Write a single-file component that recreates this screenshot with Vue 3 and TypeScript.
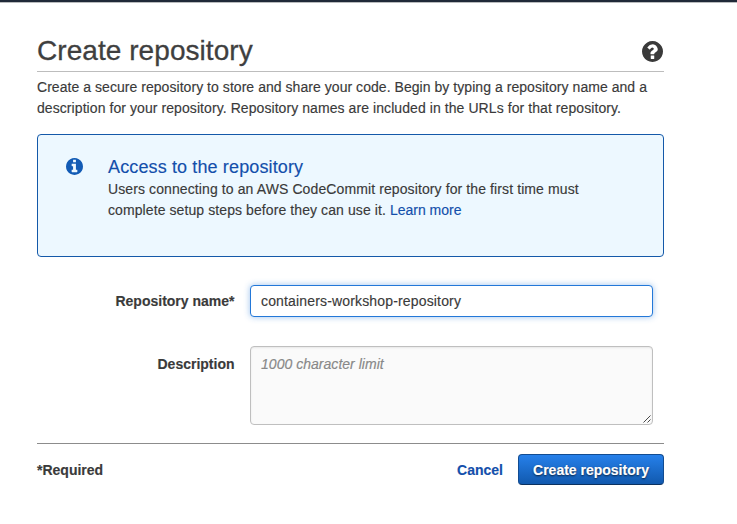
<script setup lang="ts">
import { ref } from 'vue'

const name = ref<string>('containers-workshop-repository')
const description = ref<string>('')
</script>

<template>
  <div class="page">
    <div class="topbar"></div>
    <main class="content">
      <header class="head">
        <h1>Create repository</h1>
        <svg class="help" viewBox="0 0 1536 1536" aria-label="Help">
          <path
            d="M896 1280v-192q0-14-9-23t-23-9H672q-14 0-23 9t-9 23v192q0 14 9 23t23 9h192q14 0 23-9t9-23zm256-672q0-88-55.500-173T958 297t-170-56q-243 0-391 213-15 24 8 42l142 120q7 6 19 6 16 0 25-12 53-78 86-102 34-24 76-24 48 0 80 26t32 59q0 38-20 61t-58 45q-63 28-115.500 86.500T620 892v46q0 14 9 23t23 9h212q14 0 23-9t9-23q0-19 21.500-49.500T972 839q32-18 49-28.500t46-35 44.500-48 28-50 12.500-70zm384 160q0 209-103 385.500T1153.500 1433 768 1536t-385.500-103T103 1153.500 0 768t103-385.500T382.500 103 768 0t385.500 103T1433 382.500 1536 768z"
          />
        </svg>
      </header>
      <p class="intro">
        <span class="intro-lead">Create a secure repository to store and share your code. Begin by typing a repository name and a</span><br />
        <span class="intro-rest">description for your repository. Repository names are included in the URLs for that repository.</span>
      </p>

      <section class="alert">
        <svg class="info" viewBox="0 0 1536 1536" aria-hidden="true">
          <path
            d="M1024 1248v-160q0-14-9-23t-23-9h-96V544q0-14-9-23t-23-9H544q-14 0-23 9t-9 23v160q0 14 9 23t23 9h96v320h-96q-14 0-23 9t-9 23v160q0 14 9 23t23 9h448q14 0 23-9t9-23zM896 352V192q0-14-9-23t-23-9H672q-14 0-23 9t-9 23v160q0 14 9 23t23 9h192q14 0 23-9t9-23zm640 416q0 209-103 385.500T1153.500 1433 768 1536t-385.500-103T103 1153.500 0 768t103-385.500T382.500 103 768 0t385.500 103T1433 382.500 1536 768z"
          />
        </svg>
        <div>
          <h2>Access to the repository</h2>
          <p>
            <span class="alert-lead">Users connecting to an AWS CodeCommit repository for the first time must</span><br />
            <span class="alert-rest">complete setup steps before they can use it. </span><a>Learn more</a>
          </p>
        </div>
      </section>

      <form class="form" @submit.prevent>
        <label for="name">Repository name*</label>
        <input id="name" v-model="name" class="field name" type="text" />
        <label for="desc">Description</label>
        <div class="area">
          <textarea id="desc" v-model="description" class="field desc" placeholder="1000 character limit"></textarea>
          <svg class="grip" viewBox="0 0 8 8" aria-hidden="true"><path d="M0.500 7.500L7.500 0.500M4.500 7.500L7.500 4.500" /></svg>
        </div>
      </form>

      <footer class="foot">
        <span class="required">*Required</span>
        <a class="cancel">Cancel</a>
        <button type="button">Create repository</button>
      </footer>
    </main>
  </div>
</template>

<style>
body {
  background: #fff;
}
</style>

<style scoped>
.page {
  box-sizing: border-box;
  width: 737px;
  height: 524px;
  overflow: hidden;
  background: #fff;
  color: #3a3a3a;
  font: 14px/21px 'Liberation Sans', Arial, sans-serif;
  -webkit-text-stroke: 0.15px currentColor;
}
.topbar {
  height: 2px;
  background: #202938;
  border-bottom: 1px solid #b9bbbd;
}
.content {
  width: 627px;
  margin-left: 37px;
}
h1,
h2,
p {
  margin: 0;
  font-weight: 400;
}
span {
  white-space: nowrap;
}
.head {
  box-sizing: border-box;
  height: 69px;
  padding-top: 30px;
  border-bottom: 1px solid #bdbdbd;
  display: flex;
  justify-content: space-between;
}
h1 {
  font-size: 28px;
  line-height: 36px;
  letter-spacing: 0.06px;
  color: #3f3f3f;
  -webkit-text-stroke: 0.3px currentColor;
}
.help {
  width: 21px;
  height: 21px;
  margin: 8px 1px 0 0;
  fill: #3a3a3a;
}
.intro {
  padding-top: 5px;
}
.intro-lead {
  letter-spacing: 0.047px;
}
.intro-rest {
  letter-spacing: 0.075px;
}
.alert {
  box-sizing: border-box;
  height: 123px;
  margin-top: 15px;
  padding: 22px 27px;
  display: flex;
  border: 1px solid #1459a9;
  border-radius: 4px;
  background: #edf8ff;
}
.info {
  flex: none;
  width: 17px;
  height: 17px;
  margin: 0.5px 25.5px 0 0.5px;
  fill: #125bb5;
}
h2 {
  margin-bottom: 1px;
  font-size: 18px;
  line-height: 21px;
  letter-spacing: 0.13px;
  color: #134fab;
}
.alert-lead {
  letter-spacing: 0.105px;
}
.alert-rest {
  letter-spacing: 0.09px;
  white-space: pre;
}
.alert a,
.cancel {
  color: #134fab;
}
.form {
  margin-top: 28px;
  display: grid;
  grid-template-columns: 197.5px 403px;
  column-gap: 15.5px;
  row-gap: 29px;
}
label {
  padding-top: 6px;
  font-weight: 700;
  text-align: right;
}
label[for='desc'] {
  padding-top: 8px;
}
.field {
  display: block;
  box-sizing: border-box;
  width: 403px;
  margin: 0;
  outline: 0;
  border-radius: 4px;
  font: 14px/21px 'Liberation Sans', Arial, sans-serif;
  color: #3a3a3a;
}
.name {
  height: 32px;
  padding: 0 10px;
  border: 1px solid #2378d8;
  box-shadow: 0 0 6px rgba(35, 120, 216, 0.45);
  letter-spacing: 0.16px;
}
.area {
  position: relative;
}
.desc {
  height: 79px;
  padding: 7px 10px;
  resize: none;
  border: 1px solid #bfbfbf;
  background: #fafafa;
  box-shadow: inset 0 1px 2px rgba(0, 0, 0, 0.08);
  letter-spacing: 0.03px;
}
.desc::placeholder {
  color: #888;
  opacity: 1;
  font-style: italic;
}
.grip {
  position: absolute;
  right: 2px;
  bottom: 2px;
  width: 8px;
  height: 8px;
  fill: none;
  stroke: #333;
  stroke-width: 0.9;
}
.foot {
  margin-top: 18px;
  padding-top: 10px;
  border-top: 1px solid #8c8c8c;
  display: flex;
  align-items: center;
  font-weight: 700;
}
.required {
  margin-right: auto;
  padding-top: 2px;
}
.cancel {
  margin-right: 15px;
  padding-top: 2px;
}
button {
  box-sizing: border-box;
  width: 146px;
  height: 31px;
  padding: 2px 0 0;
  border: 1px solid #124c91;
  border-bottom-color: #0b315f;
  border-radius: 4px;
  background: linear-gradient(#2680ea, #1159ae);
  color: #fff;
  font: 700 14px/21px 'Liberation Sans', Arial, sans-serif;
  text-shadow: 0 1px 2px rgba(0, 0, 0, 0.7);
}
</style>
